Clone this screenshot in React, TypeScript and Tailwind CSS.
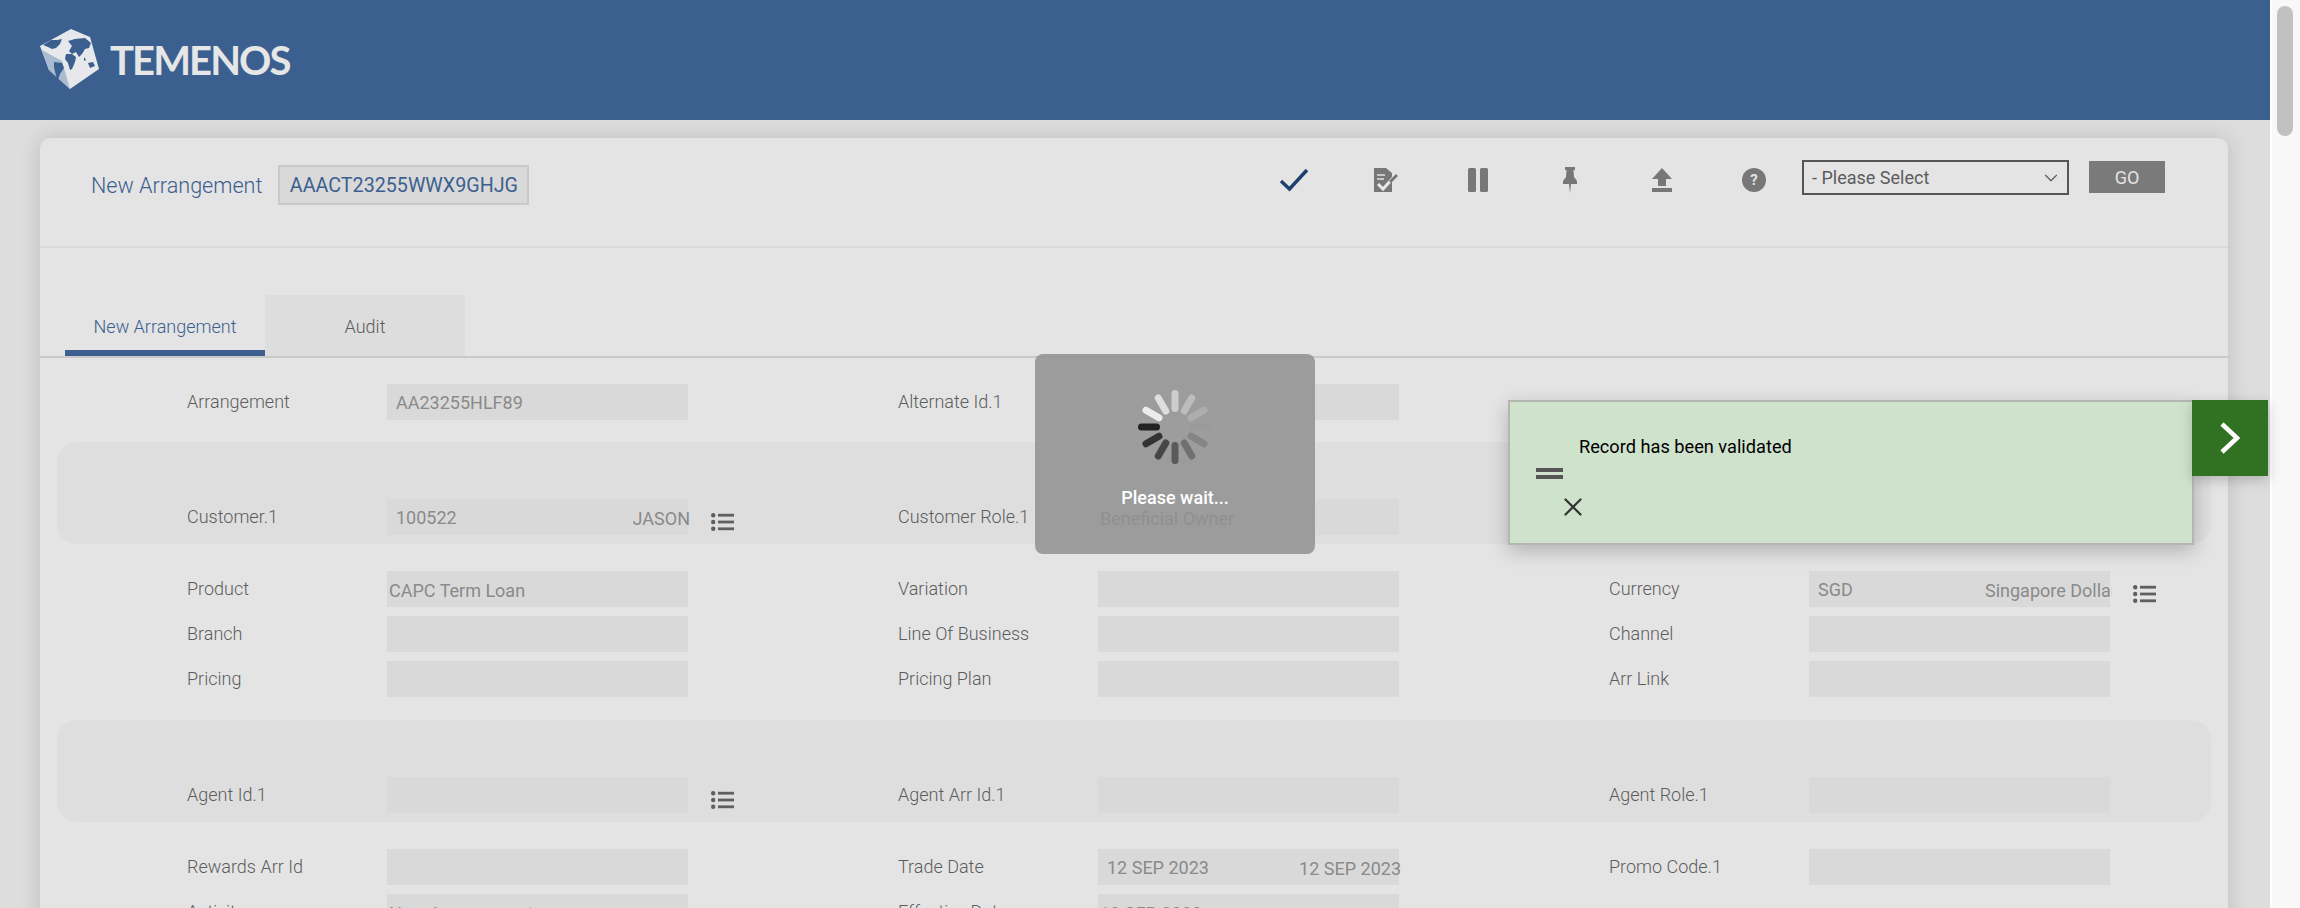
import { ChevronDown, X } from 'lucide-react';

type FieldData = {
  label: string;
  value?: string;
  extra?: string;
  extraWidth?: string;
  flush?: boolean;
  list?: boolean;
};

const spinnerColors = ['#222222', '#ececec', '#dedede', '#cdcdcd', '#bcbcbc', '#adadad', '#9a9a9a', '#858585', '#707070', '#5a5a5a', '#464646', '#333333'];

function ListIcon() {
  return (
    <svg width="23" height="18" viewBox="0 0 23 18" className="ml-[23px] mt-[14px] shrink-0" fill="#5f5f5f">
      <circle cx="2.2" cy="2.2" r="2.2" />
      <circle cx="2.2" cy="9" r="2.2" />
      <circle cx="2.2" cy="15.8" r="2.2" />
      <rect x="7" y="0.8" width="16" height="2.8" />
      <rect x="7" y="7.6" width="16" height="2.8" />
      <rect x="7" y="14.4" width="16" height="2.8" />
    </svg>
  );
}

function Field({ label, value, extra, extraWidth, flush, list }: FieldData) {
  return (
    <div className="flex w-[711px] shrink-0">
      <div className="flex h-[36px] w-[200px] shrink-0 items-center pb-[2px] text-[18px] font-light text-[#5c5c5c]">{label}</div>
      <div className={`flex h-[36px] w-[301px] shrink-0 items-center justify-between bg-[#d9d9d9] text-[18px] text-[#8a8a8a] ${flush ? 'pl-[2px]' : 'pl-[9px]'}`}>
        <span className={flush ? 'pt-[2px]' : ''}>{value}</span>
        {extra && (
          <span className={`-mr-[2px] overflow-hidden whitespace-nowrap pt-[2px] text-right ${extraWidth ?? ''}`}>{extra}</span>
        )}
      </div>
      {list && <ListIcon />}
    </div>
  );
}

function Row({ fields, className }: { fields: FieldData[]; className?: string }) {
  return (
    <div className={`flex pl-[147px] ${className ?? ''}`}>
      {fields.map((f) => (
        <Field key={f.label} {...f} />
      ))}
    </div>
  );
}

function Band({ fields, className }: { fields: FieldData[]; className?: string }) {
  return (
    <div className={`mx-[17px] flex h-[102px] rounded-[20px] bg-[#dedede] pl-[130px] pt-[57px] ${className ?? ''}`}>
      {fields.map((f) => (
        <Field key={f.label} {...f} />
      ))}
    </div>
  );
}

function Logo() {
  return (
    <svg width="75" height="72" viewBox="0 0 75 72" className="shrink-0">
      <polygon points="5,22 36,5 55,13 64,45 35,65 14,46" fill="#e6e8ec" />
      <polygon points="7,26 27,37 35,65 14,46" fill="#a9bbd1" />
      <g fill="#3b608f">
        <path d="M33 17 L40 15 L50 14 L56 19 L54 24 L50 25 L47 30 L44 33 L41 28 L37 30 L34 27 L37 22 Z" />
        <path d="M31 30 L37 30 L41 33 L40 38 L37 45 L35 46 L33 39 L30 35 Z" />
        <path d="M53 39 L58 38 L60 42 L55 44 Z" />
        <path d="M49 33 L51 36 L49 37 Z" />
        <path d="M8 21 L16 16 L22 16 L27 15 L25 20 L21 24 L17 25 L13 23 Z" />
        <path d="M19 38 L27 39 L29 44 L25 50 L23 56 L21 52 L19 43 Z" />
      </g>
    </svg>
  );
}

function Spinner() {
  return (
    <svg width="76" height="76" viewBox="-38 -38 76 76">
      {spinnerColors.map((c, i) => (
        <rect key={i} x="-37" y="-3.5" width="22" height="7" rx="3.5" fill={c} transform={`rotate(${i * 30})`} />
      ))}
    </svg>
  );
}

function ToolIcon({ children }: { children: React.ReactNode }) {
  return <div className="flex h-[28px] w-[92px] items-center justify-center">{children}</div>;
}

export default function App() {
  return (
    <div className="flex h-[908px] w-full overflow-hidden bg-[#dddddd] font-['Roboto',sans-serif]">
      <div className="relative w-[2270px] shrink-0">
        <header className="flex h-[120px] items-center bg-[#3b608f] pb-[1px] pl-[35px]">
          <Logo />
          <span className="font-['Lato',sans-serif] text-[40px] font-bold tracking-[-1.9px] text-[#e6e6e6]">TEMENOS</span>
        </header>

        <div className="px-[40px] pt-[18px]">
          <div className="h-[800px] w-[2188px] rounded-t-[10px] bg-[#e4e4e4] shadow-[0_0_22px_rgba(0,0,0,0.14)]">
            <div className="flex h-[110px] justify-between border-b-2 border-[#d9d9d9] pl-[51px] pr-[63px]">
              <div className="mt-[27px] flex h-[40px] items-center">
                <span className="pt-[2px] text-[21.6px] font-light text-[#3b608f]">New Arrangement</span>
                <span className="ml-[16px] flex h-[40px] w-[251px] items-center justify-center border-2 border-[#c9c9c9] bg-[#d9d9d9] pt-[2px] text-[19.7px] text-[#3b608f]">AAACT23255WWX9GHJG</span>
              </div>

              <div className="mt-[22px] flex items-start">
                <div className="mt-[6px] flex">
                  <ToolIcon>
                    <svg width="30" height="24" viewBox="0 0 30 24" fill="none" stroke="#1f3f6e" strokeWidth="3.4">
                      <path d="M2 13 L10.5 21 L28 2" />
                    </svg>
                  </ToolIcon>
                  <ToolIcon>
                    <svg width="26" height="26" viewBox="0 0 26 26">
                      <path d="M1 1 H13 L19 6 V25 H1 Z" fill="#777777" />
                      <path d="M4 8 H12 M4 12 H11" stroke="#e4e4e4" strokeWidth="1.5" />
                      <path d="M5 17 L10 22 L20 11" fill="none" stroke="#e8e8e8" strokeWidth="3" />
                      <path d="M16 14 L23 7 L25 9 L18 16 Z" fill="#777777" />
                    </svg>
                  </ToolIcon>
                  <ToolIcon>
                    <svg width="20" height="24" viewBox="0 0 20 24" fill="#777777">
                      <rect x="0" y="0" width="8" height="24" rx="1.5" />
                      <rect x="12" y="0" width="8" height="24" rx="1.5" />
                    </svg>
                  </ToolIcon>
                  <ToolIcon>
                    <svg width="16" height="26" viewBox="0 0 16 26" fill="#777777">
                      <path d="M3 0 H13 V3 H11.5 L12 10 L15 14 V17 H9 L8 26 L7 17 H1 V14 L4 10 L4.5 3 H3 Z" />
                    </svg>
                  </ToolIcon>
                  <ToolIcon>
                    <svg width="20" height="24" viewBox="0 0 20 24" fill="#777777">
                      <path d="M10 0 L20 11 H14 V18 H6 V11 H0 Z" />
                      <rect x="0" y="20" width="20" height="4" />
                    </svg>
                  </ToolIcon>
                  <ToolIcon>
                    <span className="flex h-[24px] w-[24px] items-center justify-center rounded-full bg-[#777777] text-[15px] font-bold text-[#e4e4e4]">?</span>
                  </ToolIcon>
                </div>
                <div className="ml-[2px] flex h-[35px] w-[267px] items-center justify-between border-2 border-[#555555] pl-[8px] pr-[5px] text-[18px] text-[#5c5c5c]">
                  <span>- Please Select</span>
                  <ChevronDown size={22} strokeWidth={1.2} color="#555555" />
                </div>
                <div className="ml-[20px] mt-[1px] flex h-[32px] w-[76px] items-center justify-center bg-[#7a7a7a] text-[18px] text-[#e4e4e4]">GO</div>
              </div>
            </div>

            <div className="mt-[47px] flex h-[63px] border-b-2 border-[#c9c9c9] pl-[25px]">
              <div className="flex h-[61px] w-[200px] items-center justify-center border-b-[6px] border-[#3b608f] pt-[8px] text-[18px] font-light text-[#3b608f]">New Arrangement</div>
              <div className="flex h-[61px] w-[200px] items-center justify-center bg-[#dddddd] pt-[2px] text-[18px] font-light text-[#5c5c5c]">Audit</div>
            </div>

            <Row
              className="pt-[26px]"
              fields={[
                { label: 'Arrangement', value: 'AA23255HLF89' },
                { label: 'Alternate Id.1' },
              ]}
            />
            <Band
              className="mt-[22px]"
              fields={[
                { label: 'Customer.1', value: '100522', extra: 'JASON', list: true },
                { label: 'Customer Role.1', value: 'Beneficial Owner', flush: true },
              ]}
            />
            <Row
              className="mt-[27px]"
              fields={[
                { label: 'Product', value: 'CAPC Term Loan', flush: true },
                { label: 'Variation' },
                { label: 'Currency', value: 'SGD', extra: 'Singapore Dollar', extraWidth: 'w-[127px] text-left', list: true },
              ]}
            />
            <Row
              className="mt-[9px]"
              fields={[
                { label: 'Branch' },
                { label: 'Line Of Business' },
                { label: 'Channel' },
              ]}
            />
            <Row
              className="mt-[9px]"
              fields={[
                { label: 'Pricing' },
                { label: 'Pricing Plan' },
                { label: 'Arr Link' },
              ]}
            />
            <Band
              className="mt-[23px]"
              fields={[
                { label: 'Agent Id.1', list: true },
                { label: 'Agent Arr Id.1' },
                { label: 'Agent Role.1' },
              ]}
            />
            <Row
              className="mt-[27px]"
              fields={[
                { label: 'Rewards Arr Id' },
                { label: 'Trade Date', value: '12 SEP 2023', extra: '12 SEP 2023' },
                { label: 'Promo Code.1' },
              ]}
            />
            <Row
              className="mt-[9px]"
              fields={[
                { label: 'Activity', value: 'New Arrangement', flush: true },
                { label: 'Effective Date', value: '12 SEP 2023', flush: true },
              ]}
            />
          </div>
        </div>

        <div className="absolute left-[1035px] top-[354px] flex h-[200px] w-[280px] flex-col items-center rounded-[8px] bg-[#919191]/85 pt-[35px]">
          <Spinner />
          <span className="mt-[19px] text-[18px] font-medium text-white">Please wait...</span>
        </div>

        <div className="absolute left-[1508px] top-[400px] h-[145px] w-[686px] border-2 border-[#b4b6b2] bg-[#cfe2cc] shadow-[0_6px_18px_rgba(0,0,0,0.22)]">
          <p className="ml-[69px] mt-[34px] text-[18.2px] leading-[22px] text-black">Record has been validated</p>
          <div className="ml-[26px] mt-[10px] flex w-[27px] flex-col gap-[3px]">
            <span className="h-[4px] bg-[#555555]" />
            <span className="h-[4px] bg-[#555555]" />
          </div>
          <X size={30} strokeWidth={1.8} color="#333333" className="ml-[48px] mt-[13px]" />
        </div>

        <div className="absolute left-[2192px] top-[400px] flex h-[76px] w-[76px] items-center justify-center bg-[#317122] shadow-[0_4px_12px_rgba(0,0,0,0.2)]">
          <svg width="22" height="32" viewBox="0 0 22 32" fill="none" stroke="#ffffff" strokeWidth="4.5">
            <path d="M3 2 L18 16 L3 30" />
          </svg>
        </div>
      </div>

      <aside className="flex w-[30px] shrink-0 justify-center border-l-2 border-[#ffffff] bg-[#f8f8f8] pr-[2px] pt-[6px]">
        <div className="h-[130px] w-[16px] rounded-full bg-[#c1c1c1]" />
      </aside>
    </div>
  );
}
